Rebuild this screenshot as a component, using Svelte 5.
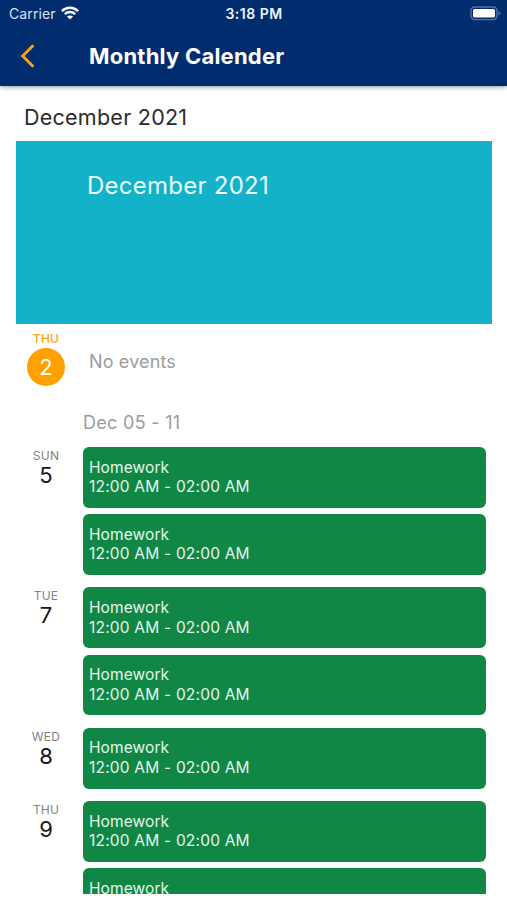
<script>
  const days = [
    { name: 'SUN', date: 5, events: 2 },
    { name: 'TUE', date: 7, events: 2 },
    { name: 'WED', date: 8, events: 1 },
    { name: 'THU', date: 9, events: 2 },
  ];
</script>

<div class="screen">
  <header>
    <div class="status">
      <div class="carrier">
        <span>Carrier</span>
        <svg width="18" height="14" viewBox="0 0 18 14" fill="none" stroke="#fff" stroke-width="2.5">
          <path d="M0.9 5.1C5.4 0.7 12.6 0.7 17.1 5.1" />
          <path d="M3.8 8.2C6.8 5.4 11.2 5.4 14.2 8.2" />
          <path d="M9 13.6L5.9 10.6C7.6 9 10.4 9 12.1 10.6Z" fill="#fff" stroke="none" />
        </svg>
      </div>
      <span class="time">3:18 PM</span>
      <svg class="battery" width="31" height="15" viewBox="0 0 31 15">
        <rect x="1" y="1" width="26" height="12.6" rx="3.8" fill="none" stroke="#56739f" stroke-width="1.4" />
        <rect x="3" y="3" width="22" height="8.6" rx="1.6" fill="#fff" />
        <path d="M28.5 5.1Q30.4 5.8 30.4 7.3T28.5 9.5Z" fill="#56739f" />
      </svg>
    </div>
    <div class="bar">
      <svg width="16" height="26" viewBox="0 0 16 26" fill="none" stroke="#f5a31c" stroke-width="2.9">
        <path d="M14.4 2.3L3.7 13L14.4 23.7" />
      </svg>
      <h1>Monthly Calender</h1>
    </div>
  </header>

  <h2>December 2021</h2>

  <main>
    <section class="banner"><span>December 2021</span></section>
    <section class="today">
      <div class="label">
        <span class="name">THU</span>
        <span class="circle">2</span>
      </div>
      <span class="none">No events</span>
    </section>
    <div class="week">Dec 05 - 11</div>
    {#each days as day}
      <section class="day">
        <div class="label">
          <span class="name">{day.name}</span>
          <span class="date">{day.date}</span>
        </div>
        <div class="events">
          {#each Array(day.events) as _}
            <article>
              <span class="title">Homework</span>
              <span class="hours">12:00 AM - 02:00 AM</span>
            </article>
          {/each}
        </div>
      </section>
    {/each}
  </main>
</div>

<style>
  :global(body) { background: #fff; }
  .screen {
    box-sizing: border-box;
    width: 507px;
    height: 900px;
    overflow: hidden;
    padding-bottom: 6px;
    display: flex;
    flex-direction: column;
    background: #fff;
    font-family: Inter, 'Liberation Sans', sans-serif;
    white-space: nowrap;
  }
  svg { display: block; }
  header {
    height: 86px;
    flex: none;
    background: #012d6e;
    color: #fff;
    box-shadow: 0 1px 5px rgba(0, 0, 0, 0.42);
  }
  .status {
    height: 28px;
    display: grid;
    grid-template-columns: 1fr auto 1fr;
    align-items: center;
    padding: 0 6px 0 9px;
    font-size: 14px;
  }
  .carrier { display: flex; align-items: center; gap: 6px; color: #d9e2ee; letter-spacing: 0.1px; line-height: 16px; }
  .carrier svg { margin: -2px 0 0 -1px; }
  .time { font-weight: 600; font-size: 14px; line-height: 16px; letter-spacing: 0.5px; color: #eef3f8; padding-right: 2px; }
  .time { padding-bottom: 1px; }
  .battery { justify-self: end; margin-top: -1px; }
  .bar { height: 56px; display: flex; align-items: center; padding-left: 19px; }
  h1 { margin: 0 0 0 54px; font-size: 22px; font-weight: 700; line-height: 28px; letter-spacing: 0.22px; }
  h2 {
    margin: 0;
    padding: 17px 0 0 24px;
    height: 38px;
    flex: none;
    font-size: 21.5px;
    font-weight: 400;
    line-height: 28px;
    letter-spacing: 0.25px;
    color: #2b2b2b;
  }
  main { flex: 1; min-height: 0; overflow: hidden; }
  .banner {
    height: 183.4px;
    margin: 0 15px 0 15.6px;
    background: #14b2c9;
    color: #e9fbfd;
    font-size: 24px;
    line-height: 30px;
  }
  .banner span { display: block; padding: 30px 0 0 71.4px; letter-spacing: 0.25px; }
  .today { display: flex; height: 84.6px; }
  .label {
    box-sizing: border-box;
    width: 83px;
    flex: none;
    display: flex;
    flex-direction: column;
    align-items: center;
    padding-left: 9px;
  }
  .name { font-size: 12px; line-height: 16px; letter-spacing: 0.2px; color: #828282; }
  .day .name { line-height: 17px; }
  .today .name { color: #ffa30a; margin-top: 7px; font-weight: 500; }
  .circle {
    width: 38px;
    height: 38px;
    margin-top: 0.6px;
    border-radius: 50%;
    background: #ffa200;
    color: #fff;
    font-size: 22px;
    line-height: 38px;
    text-align: center;
  }
  .none { padding: 25px 0 0 6px; font-size: 18px; line-height: 25px; letter-spacing: 0.15px; color: #9c9c9c; }
  .week { height: 38px; padding-left: 83px; font-size: 18px; line-height: 27px; letter-spacing: 0.3px; color: #9c9c9c; }
  .day { display: flex; margin-bottom: 12.4px; }
  .date { font-size: 22px; line-height: 22px; color: #161616; }
  .events { flex: 1; display: flex; flex-direction: column; gap: 6.4px; margin-right: 21px; }
  article {
    box-sizing: border-box;
    height: 60.8px;
    padding: 10.6px 6px 0;
    border-radius: 6px;
    background: #118746;
    color: #e6f6ea;
    display: flex;
    flex-direction: column;
    font-size: 15.5px;
    line-height: 19.6px;
    letter-spacing: 0.2px;
  }
  .title { letter-spacing: 0.1px; }
</style>
